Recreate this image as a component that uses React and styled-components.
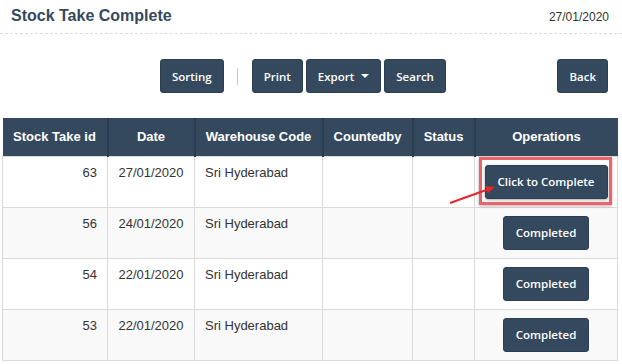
import React from "react";
import styled, { createGlobalStyle } from "styled-components";

const Global = createGlobalStyle`
  html, body { margin: 0; padding: 0; background: #fff; }
  body { font-family: "Liberation Sans", Arial, sans-serif; color: #333; }
`;

const Page = styled.div`
  width: 622px;
  height: 364px;
  overflow: hidden;
`;

const Header = styled.div`
  display: flex;
  align-items: baseline;
  justify-content: space-between;
  padding: 6px 13px 7px 11px;
  border-bottom: 1px dashed #dcdcdc;
`;

const Title = styled.h1`
  margin: 0;
  font-size: 16px;
  line-height: 20px;
  font-weight: bold;
  color: #34495e;
`;

const DateText = styled.span`
  font-size: 12px;
  color: #333;
`;

const Toolbar = styled.div`
  display: flex;
  align-items: center;
  padding: 0 14px 0 160px;
  margin: 25px 0 25px;
`;

const Group = styled.div`
  display: flex;
  align-items: center;
  gap: 3px;
`;

const Separator = styled.span`
  width: 1px;
  height: 17px;
  background: #c8c8c8;
  margin: 0 14px 0 13px;
`;

const Button = styled.button`
  display: inline-flex;
  align-items: center;
  justify-content: center;
  gap: 7px;
  height: 34px;
  padding: 0 ${(p) => p.$px || 11}px;
  background: #34495e;
  border: 1px solid #2c3e50;
  border-radius: 3px;
  color: #fff;
  font-family: "Open Sans", sans-serif;
  font-weight: 600;
  font-size: 11.5px;
  white-space: nowrap;
  cursor: pointer;
  vertical-align: top;
  box-shadow: ${(p) => (p.$shadow ? "0 1px 3px rgba(0,0,0,0.35)" : "none")};
`;

const Caret = styled.span`
  width: 0;
  height: 0;
  border-left: 4px solid transparent;
  border-right: 4px solid transparent;
  border-top: 4px solid #fff;
`;

const Back = styled(Button)`
  margin-left: auto;
`;

const Table = styled.table`
  margin-left: 2px;
  width: 615px;
  border-collapse: collapse;
  table-layout: fixed;
  font-size: 13px;
`;

const Th = styled.th`
  background: #34495e;
  color: #fff;
  font-weight: bold;
  height: 38px;
  padding: 0 6px;
  box-sizing: border-box;
  border-left: 2px solid #2a3c4e;
  &:first-child { border-left: none; }
  text-align: center;
  white-space: nowrap;
`;

const Tr = styled.tr`
  background: ${(p) => (p.$alt ? "#f9f9f9" : "#fff")};
`;

const Td = styled.td`
  border: 1px solid #dadada;
  padding: 7px 10px 8px;
  line-height: 18px;
  vertical-align: top;
  text-align: ${(p) => p.$align || "left"};
  height: 35px;
`;

const OpTd = styled(Td)`
  padding: 8px 4px 8px;
  height: 34px;
  text-align: center;
  line-height: 0;
`;

const Annotated = styled.span`
  position: relative;
  display: inline-block;
`;

const RedBox = styled.span`
  position: absolute;
  left: -6px;
  top: -8px;
  right: -4px;
  bottom: -6px;
  border: 3px solid #f0626a;
  box-shadow: 0 1px 3px rgba(0, 0, 0, 0.3);
  pointer-events: none;
`;

const Arrow = styled.svg`
  position: absolute;
  left: -40px;
  top: 18px;
  overflow: visible;
`;

const rows = [
  { id: 63, date: "27/01/2020", wh: "Sri Hyderabad", pending: true },
  { id: 56, date: "24/01/2020", wh: "Sri Hyderabad" },
  { id: 54, date: "22/01/2020", wh: "Sri Hyderabad" },
  { id: 53, date: "22/01/2020", wh: "Sri Hyderabad" },
];

export default function App() {
  return (
    <Page>
      <Global />
      <Header>
        <Title>Stock Take Complete</Title>
        <DateText>27/01/2020</DateText>
      </Header>
      <Toolbar>
        <Button>Sorting</Button>
        <Separator />
        <Group>
          <Button>Print</Button>
          <Button>
            Export <Caret />
          </Button>
          <Button>Search</Button>
        </Group>
        <Back>Back</Back>
      </Toolbar>
      <Table>
        <colgroup>
          <col style={{ width: 105 }} />
          <col style={{ width: 87 }} />
          <col style={{ width: 128 }} />
          <col style={{ width: 90 }} />
          <col style={{ width: 62 }} />
          <col style={{ width: 143 }} />
        </colgroup>
        <thead>
          <tr>
            <Th>Stock Take id</Th>
            <Th>Date</Th>
            <Th>Warehouse Code</Th>
            <Th>Countedby</Th>
            <Th>Status</Th>
            <Th>Operations</Th>
          </tr>
        </thead>
        <tbody>
          {rows.map((r, i) => (
            <Tr key={r.id} $alt={i % 2 === 1}>
              <Td $align="right">{r.id}</Td>
              <Td $align="center">{r.date}</Td>
              <Td>{r.wh}</Td>
              <Td />
              <Td />
              <OpTd>
                {r.pending ? (
                  <Annotated>
                    <Button $px={12} $shadow>Click to Complete</Button>
                    <RedBox />
                    <Arrow width="54" height="26" viewBox="0 0 54 26">
                      <line x1="5" y1="20" x2="44" y2="6" stroke="#e5252b" strokeWidth="2" />
                      <polygon points="50,4 40,3 43,10" fill="#e5252b" />
                    </Arrow>
                  </Annotated>
                ) : (
                  <Button $px={12}>Completed</Button>
                )}
              </OpTd>
            </Tr>
          ))}
        </tbody>
      </Table>
    </Page>
  );
}
